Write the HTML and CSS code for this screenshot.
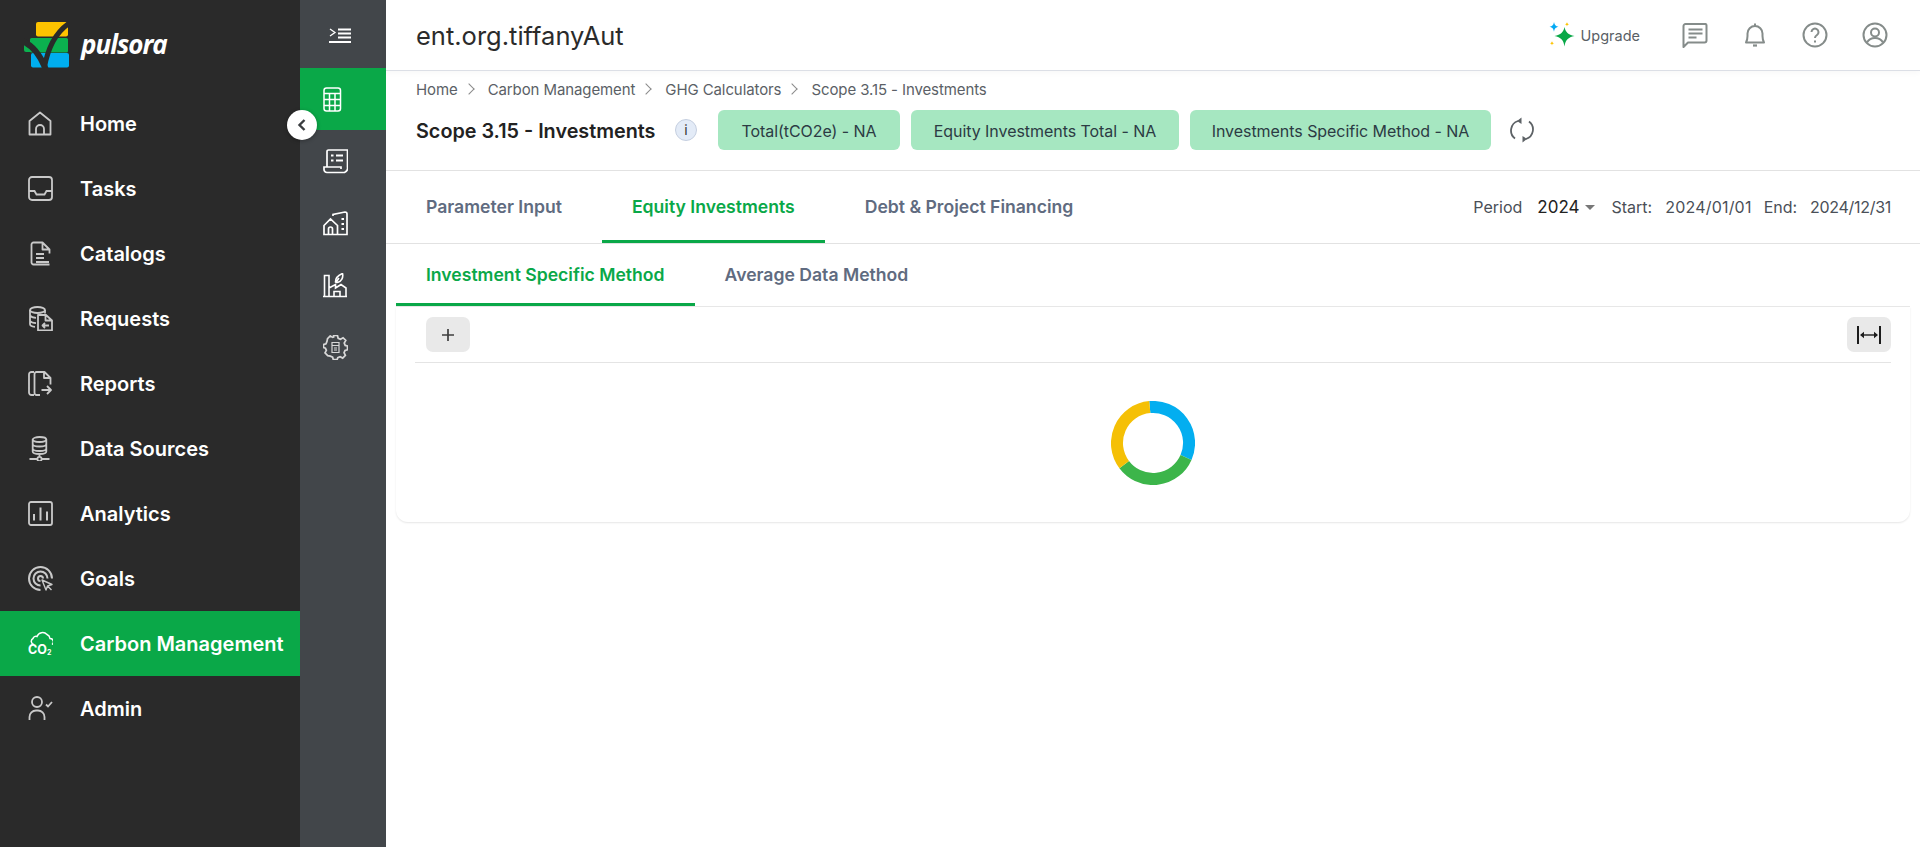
FILE: index.html
```html
<!DOCTYPE html>
<html lang="en">
<head>
    <meta charset="UTF-8">
    <title>Scope 3.15 - Investments</title>
    <link rel="stylesheet" href="styles.css">
</head>
<body>
<div class="app">
    <aside class="sidebar">
        <div class="logo">
            <svg class="logo-mark" viewBox="0 0 46 46">
                <rect x="12" y="0" width="32" height="14.500" rx="2" fill="#fdc300"/>
                <rect x="6" y="16" width="38" height="14.500" rx="1.500" fill="#0bb14f"/>
                <path d="M0 22l7 2v6H2a2 2 0 0 1-2-2z" fill="#0bb14f"/>
                <rect x="7" y="31" width="38" height="14.500" rx="2" fill="#00aeef"/>
                <path d="M-2 19c10 4 18 13 24 29" fill="none" stroke="#2a2a2a" stroke-width="6"/>
                <path d="M47 0C34 8 24 22 20 48" fill="none" stroke="#2a2a2a" stroke-width="5"/>
            </svg>
            <span class="logo-text">pulsora</span>
        </div>
        <nav class="nav">
            <a class="nav-item">
                <svg class="nav-icon" viewBox="0 0 25 25"><path d="M1.500 23.500V10L12 1.500 22.500 10v13.500zM8 23.500V18a4 4 0 0 1 8 0v5.500" stroke-linejoin="round"/></svg>
                <span>Home</span>
            </a>
            <a class="nav-item">
                <svg class="nav-icon" viewBox="0 0 25 25"><rect x="1" y="1" width="23" height="23" rx="3"/><path d="M1 15h5.500l2 3.500h8l2-3.500H24"/></svg>
                <span>Tasks</span>
            </a>
            <a class="nav-item">
                <svg class="nav-icon" viewBox="0 0 25 25"><path d="M21.500 23.500h-16a2 2 0 0 1-2-2v-18a2 2 0 0 1 2-2h9l7 7v4M14.500 1.500v7h7M8 13h8M8 17h8M8 21h13" stroke-linejoin="round"/></svg>
                <span>Catalogs</span>
            </a>
            <a class="nav-item">
                <svg class="nav-icon" viewBox="0 0 25 25"><ellipse cx="9.500" cy="4" rx="7.500" ry="3"/><path d="M2 4v14c0 1.500 2 2.500 5 2.800M17 4v3.500M2 9.500c1 1.500 3 2.200 6 2.400M2 15c1 1.200 3 2 6 2.200"/><path d="M10 9h8l6 5.500V24.500H10zM17.500 9v5.500H24M21 19.500h-6.500l2.500-2.500M14.500 19.500l2.500 2.500" stroke-linejoin="round"/></svg>
                <span>Requests</span>
            </a>
            <a class="nav-item">
                <svg class="nav-icon" viewBox="0 0 25 25"><path d="M6 1H3.500A2.500 2.500 0 0 0 1 3.500v18A2.500 2.500 0 0 0 3.500 24H6M12 24H8.500a2 2 0 0 1-2-2V3a2 2 0 0 1 2-2h8l6 6v6.500M16 1.500V7h6.500M13.500 19h9M19 15l4 4-4 4" stroke-linejoin="round"/></svg>
                <span>Reports</span>
            </a>
            <a class="nav-item">
                <svg class="nav-icon" viewBox="0 0 25 25"><ellipse cx="11.500" cy="3.500" rx="6.800" ry="2.500"/><path d="M4.700 3.500v12c0 1.500 3 2.500 6.800 2.500s6.800-1 6.800-2.500v-12M4.700 8c0 1.500 3 2.500 6.800 2.500S18.300 9.500 18.300 8M4.700 12.500c0 1.500 3 2.500 6.800 2.500s6.800-1 6.800-2.500M11.500 18v2.500M1.500 23H9M14 23h7.500"/><circle cx="11.500" cy="23" r="2.100"/></svg>
                <span>Data Sources</span>
            </a>
            <a class="nav-item">
                <svg class="nav-icon" viewBox="0 0 25 25"><rect x="1" y="1" width="23" height="23" rx="2"/><path d="M6 13v6.500M12.500 6.500v13M19 10.500v9" stroke-width="2"/></svg>
                <span>Analytics</span>
            </a>
            <a class="nav-item">
                <svg class="nav-icon" viewBox="0 0 25 25"><path d="M24 12.500A11.500 11.500 0 1 0 12.500 24M19.500 12.500a7 7 0 1 0-7 7M15 12.500a2.500 2.500 0 1 0-2.500 2.500" stroke-width="2"/><path d="M14 14l4 10 1.500-4 4.500-1.500zM19.500 20l4 4" stroke-linejoin="round" stroke-width="1.400"/></svg>
                <span>Goals</span>
            </a>
            <a class="nav-item active">
                <svg class="nav-icon" viewBox="0 0 25 25"><path d="M6 13.500a3.200 3.200 0 0 1-1-6 3 3 0 0 1 4-2 6 6 0 0 1 10-2 5 5 0 0 1 3 4 3.300 3.300 0 0 1 2 6" stroke-width="1.500"/><text class="co-text" x="0" y="23">CO<tspan class="co-sub" dy="1">2</tspan></text></svg>
                <span>Carbon Management</span>
            </a>
            <a class="nav-item">
                <svg class="nav-icon" viewBox="0 0 25 25"><circle cx="9" cy="6" r="5"/><path d="M1.500 24v-3a6.500 6.500 0 0 1 6.500-6.500h2a6.500 6.500 0 0 1 6.500 6.500v3M18 8.500l2 2 4-4.500"/></svg>
                <span>Admin</span>
            </a>
        </nav>
        <button class="collapse-btn">
            <svg viewBox="0 0 14 14" width="14" height="14"><path d="M9.500 2L4.500 7l5 5" fill="none" stroke="#3a3d40" stroke-width="2.400"/></svg>
        </button>
    </aside>

    <div class="rail">
        <a class="rail-item rail-toggle">
            <svg class="toggle-icon" viewBox="0 0 22 16"><path d="M1 1l5 3.500L1 8" stroke-width="1.300"/><path d="M9 1.500h13M9 5.500h13M9 9.500h13M0 14h22" stroke-width="2"/></svg>
        </a>
        <a class="rail-item active">
            <svg class="rail-icon" viewBox="0 0 25 25"><rect x="1" y="1" width="16.500" height="23" rx="2.500"/><path d="M1 6.500h16.500M1 12.500h16.500M1 18.500h16.500M6.500 6.500V24M12 6.500V24"/></svg>
        </a>
        <a class="rail-item">
            <svg class="rail-icon" viewBox="0 0 25 25"><path d="M4 18V2.500A1.500 1.500 0 0 1 5.500 1h19v17a5 5 0 0 1-3 5.500H4a3 3 0 0 1-3-3V18h17v2" stroke-width="1.700"/><path d="M8 6.500h2.500M13 6.500h7M8 11.500h2.500M13 11.500h7" stroke-width="2.200"/></svg>
        </a>
        <a class="rail-item">
            <svg class="rail-icon" viewBox="0 0 25 25"><path d="M1 23.500v-9l6.500-6.500 7 6.500v9zM5.500 23.500V18a2 2 0 0 1 4 0v5.500M10 5V3.500L22 1a2 2 0 0 1 2 2v20.500h-9" stroke-width="1.700"/><path d="M18.500 8h2.500M18.500 13h2.500M18.500 18h2.500" stroke-width="2.200"/></svg>
        </a>
        <a class="rail-item">
            <svg class="rail-icon" viewBox="0 0 25 25"><path d="M0 23.500h24M1.500 23.500V2.500h4.500v21M6 15l6.500-3.500v3.500l5.500-3.500 5 3.500v8.500M11 23.500V18.500h6v5M12.500 9c0-4 3-7 7-8.500 1 4-1 8-5 9zM12.500 10l3.500-5" stroke-width="1.600"/></svg>
        </a>
        <a class="rail-item">
            <svg class="rail-icon rail-gear" viewBox="0 0 25 25"><path d="M10.500 1h4l.8 3 2.400 1 2.700-1.600 2.800 2.800L21.600 9l1 2.400 2.400.6v4l-2.600.7-1 2.300 1.400 2.800-2.800 2.800-2.700-1.500-2.400 1-.7 2h-4l-.7-2.500-2.400-1L4.400 22 1.600 19.200 3 16.500 2 14.200 0 13.500v-3l2.600-.9 1-2.400L4.200 4.300 7 1.500 9.600 3l1-.5z" transform="translate(.5 -.5) scale(.96)" stroke-width="1.800"/><path d="M9 7.500h7v10H9zM9 10.500h7M11 13h3M11 15h3" stroke-width="1.200"/></svg>
        </a>
    </div>

    <main class="main">
        <header class="topbar">
            <h1 class="org-name">ent.org.tiffanyAut</h1>
            <div class="top-actions">
                <a class="upgrade">
                    <svg class="upgrade-icon" viewBox="0 0 26 26">
                        <path d="M15.500 5c1.200 5.500 3.500 7.500 10 9-6.500 1.500-8.800 3.500-10 10.500-1.200-7-3.500-9-10-10.500 6.500-1.500 8.800-3.500 10-9z" fill="#0aa848"/>
                        <path d="M5 0c.6 3 1.500 4 4.500 4.800C6.500 5.600 5.600 6.600 5 9.800 4.400 6.600 3.500 5.600.5 4.800 3.500 4 4.400 3 5 0z" fill="#03a9f4"/>
                        <path d="M18 0c.3 1.500.7 2 2.200 2.300C18.700 2.600 18.300 3 18 4.600c-.3-1.600-.7-2-2.200-2.300C17.300 2 17.700 1.500 18 0z" fill="#fdc300"/>
                        <path d="M3 19c.3 1.500.7 2 2.200 2.300C3.700 21.600 3.300 22 3 23.600c-.3-1.600-.7-2-2.200-2.300C2.300 21 2.700 20.500 3 19z" fill="#fdc300"/>
                    </svg>
                    <span>Upgrade</span>
                </a>
                <svg class="top-icon" viewBox="0 0 26 26"><path d="M1.500 25V4a2 2 0 0 1 2-2h20a1.500 1.500 0 0 1 1 1.500v15a2 2 0 0 1-2 2H6z" stroke-linejoin="round"/><path d="M6.500 7.500h14M6.500 11.500h14M6.500 15.500h8"/></svg>
                <svg class="top-icon" viewBox="0 0 26 26"><path d="M4 20.500c1-2 1.500-3 1.500-6.500v-2.500a7.500 7.500 0 0 1 15 0V14c0 3.500.5 4.500 1.500 6.500zM13 1.500V4" stroke-linejoin="round"/><path d="M11 23.500h4" stroke-width="2.200"/></svg>
                <svg class="top-icon" viewBox="0 0 26 26"><circle cx="13" cy="13" r="11.500"/><path d="M9.500 10a3.500 3.500 0 1 1 5.500 3c-1.500 1-2 1.700-2 3"/><path d="M13 18.500v2" stroke-width="2"/></svg>
                <svg class="top-icon" viewBox="0 0 26 26"><circle cx="13" cy="13" r="11.500"/><circle cx="13" cy="10.500" r="4"/><path d="M5 20.500c2-3.500 5-4.500 8-4.500s6 1 8 4.500"/></svg>
            </div>
        </header>

        <section class="page-head">
            <div class="breadcrumb">
                <span>Home</span><i class="crumb-sep"></i>
                <span>Carbon Management</span><i class="crumb-sep"></i>
                <span>GHG Calculators</span><i class="crumb-sep"></i>
                <span>Scope 3.15 - Investments</span>
            </div>
            <div class="title-row">
                <h2 class="page-title">Scope 3.15 - Investments</h2>
                <span class="info-badge">i</span>
                <div class="chips">
                    <span class="chip chip-total">Total(tCO2e) - NA</span>
                    <span class="chip chip-equity">Equity Investments Total - NA</span>
                    <span class="chip chip-method">Investments Specific Method - NA</span>
                </div>
                <svg class="sync-icon" viewBox="0 0 26 28"><path d="M6 22.500A10 10 0 0 1 9 5M20 5.500A10 10 0 0 1 17 23"/><path d="M12.500 1.500l-4.500 3.500 4.500 3zM13.500 26.500l4.500-3.500-4.500-3z" fill="#5d6266" stroke="none"/></svg>
            </div>
        </section>

        <div class="tabs-row">
            <div class="tabs">
                <a class="tab">Parameter Input</a>
                <a class="tab active">Equity Investments</a>
                <a class="tab">Debt &amp; Project Financing</a>
            </div>
            <div class="period">
                <span class="period-label">Period</span>
                <span class="period-year">2024</span>
                <i class="caret"></i>
                <span class="date-label">Start:</span>
                <span class="date-value">2024/01/01</span>
                <span class="date-label date-end">End:</span>
                <span class="date-value date-last">2024/12/31</span>
            </div>
        </div>

        <div class="subtabs">
            <a class="subtab active">Investment Specific Method</a>
            <a class="subtab">Average Data Method</a>
        </div>

        <section class="card">
            <div class="toolbar">
                <button class="tool-btn">
                    <svg viewBox="0 0 14 14" width="14" height="14"><path d="M7 1v12M1 7h12" stroke="#3f3f3f" stroke-width="1.700" fill="none"/></svg>
                </button>
                <button class="tool-btn">
                    <svg viewBox="0 0 24 18" width="24" height="18"><path d="M1 0v18M23 0v18" stroke="#1c1c1c" stroke-width="2" fill="none"/><path d="M4 9h16" stroke="#1c1c1c" stroke-width="1.400"/><path d="M3 9l4-3.200v6.400zM21 9l-4-3.200v6.400z" fill="#1c1c1c"/></svg>
                </button>
            </div>
            <div class="loader">
                <svg viewBox="0 0 84 84" width="84" height="84" class="spinner">
                    <path d="M38.800 6.100A36 36 0 0 1 75 56.500" stroke="#03aef0"/>
                    <path d="M75 56.500A36 36 0 0 1 13.200 63.600" stroke="#3cb54a"/>
                    <path d="M13.200 63.600A36 36 0 0 1 38.800 6.100" stroke="#f5c006"/>
                </svg>
            </div>
        </section>
    </main>
</div>
</body>
</html>
```

FILE: styles.css
```css
* {
    box-sizing: border-box;
}
html, body {
    margin: 0;
    height: 100%;
    overflow: hidden;
    background: #fff;
    font-family: "Inter", "Noto Sans", sans-serif;
    color: #333;
}
h1, h2 {
    margin: 0;
    font-weight: normal;
}
button {
    border: 0;
    padding: 0;
    font: inherit;
}
.app {
    display: flex;
    height: 847px;
}

/* dark sidebar */
.sidebar {
    position: relative;
    width: 300px;
    flex: none;
    background: #2a2a2a;
    z-index: 2;
}
.logo {
    display: flex;
    align-items: center;
    height: 91px;
    padding: 0 0 1px 24px;
}
.logo-mark {
    width: 46px;
    height: 46px;
    flex: none;
}
.logo-text {
    margin-left: 11px;
    margin-top: -2px;
    font-family: "Open Sans", sans-serif;
    font-size: 26px;
    font-weight: 700;
    font-style: italic;
    color: #fff;
    letter-spacing: -1px;
}
.nav-item {
    display: flex;
    align-items: center;
    height: 65px;
    padding-left: 28px;
    font-size: 20px;
    font-weight: 600;
    color: #fff;
}
.nav-item.active {
    background: #0aa848;
}
.nav-icon {
    width: 25px;
    height: 25px;
    margin-right: 27px;
    flex: none;
    fill: none;
    stroke: #c9c9c9;
    stroke-width: 1.800;
}
.nav-item.active .nav-icon {
    stroke: #fff;
}
.co-text {
    font-size: 12.500px;
    font-weight: 700;
    fill: #fff;
    stroke: none;
}
.co-sub {
    font-size: 7px;
}
.collapse-btn {
    position: absolute;
    left: 287px;
    top: 110px;
    width: 30px;
    height: 30px;
    border-radius: 50%;
    background: #fff;
    box-shadow: 0 1px 4px rgba(0, 0, 0, 0.3);
    display: flex;
    align-items: center;
    justify-content: center;
}

/* icon rail */
.rail {
    width: 86px;
    flex: none;
    background: #42464a;
}
.rail-item {
    display: flex;
    align-items: center;
    height: 62px;
    padding-left: 23px;
}
.rail-toggle {
    height: 68px;
    padding: 4px 0 0 29px;
}
.rail-item.active {
    background: #0aa848;
}
.toggle-icon {
    width: 22px;
    height: 16px;
    fill: none;
    stroke: #fff;
}
.rail-icon {
    width: 25px;
    height: 25px;
    fill: none;
    stroke: #fff;
    stroke-width: 1.500;
}
.rail-gear {
    stroke: #d8d8d8;
}

/* right side */
.main {
    flex: 1;
    min-width: 0;
}
.topbar {
    display: flex;
    align-items: center;
    justify-content: space-between;
    height: 71px;
    padding: 0 32px 0 30px;
    border-bottom: 1px solid #dcdfe6;
    box-shadow: 0 2px 6px rgba(0, 0, 0, 0.03);
}
.org-name {
    font-size: 25.500px;
    color: #2b2b2b;
}
.top-actions {
    display: flex;
    align-items: center;
}
.upgrade {
    display: flex;
    align-items: center;
    margin-right: 42px;
    font-size: 14.500px;
    color: #5a5f66;
}
.upgrade-icon {
    width: 26px;
    height: 26px;
    margin-right: 6px;
    margin-left: -3px;
}
.top-icon {
    width: 26px;
    height: 26px;
    margin-left: 34px;
    fill: none;
    stroke: #858c8a;
    stroke-width: 2;
}
.upgrade + .top-icon {
    margin-left: 0;
}

.page-head {
    height: 100px;
    padding: 9px 30px 0;
    border-bottom: 1px solid #e2e2e2;
}
.breadcrumb {
    display: flex;
    align-items: center;
    height: 18px;
    font-size: 15px;
    letter-spacing: -0.1px;
    color: #5b5f66;
}
.crumb-sep {
    width: 8px;
    height: 8px;
    margin: 0 15px 0 7px;
    border-top: 1.500px solid #8a8a8a;
    border-right: 1.500px solid #8a8a8a;
    transform: rotate(45deg);
}
.title-row {
    display: flex;
    align-items: center;
    height: 40px;
    margin-top: 12px;
}
.page-title {
    padding-top: 1px;
    font-size: 19.800px;
    font-weight: 600;
    color: #222;
    width: 239px;
    white-space: nowrap;
}
.info-badge {
    width: 22px;
    height: 22px;
    margin-left: 20px;
    border-radius: 50%;
    border: 1px solid #c5cfe0;
    background: #e3ebf7;
    text-align: center;
    font-size: 14px;
    line-height: 20px;
    color: #333;
}
.chips {
    display: flex;
    gap: 11px;
    margin-left: 21px;
}
.chip {
    display: flex;
    align-items: center;
    justify-content: center;
    height: 40px;
    padding-top: 1px;
    border-radius: 6px;
    background: #a6e7c1;
    font-size: 16px;
    letter-spacing: -0.05px;
    color: #2c3b44;
}
.chip-total {
    width: 182px;
}
.chip-equity {
    width: 268px;
}
.chip-method {
    width: 301px;
}
.sync-icon {
    width: 26px;
    height: 28px;
    margin-left: 18px;
    fill: none;
    stroke: #5d6266;
    stroke-width: 1.800;
}

.tabs-row {
    display: flex;
    justify-content: space-between;
    align-items: center;
    height: 73px;
    border-bottom: 1px solid #e2e2e2;
}
.tabs {
    display: flex;
    height: 72px;
    padding-left: 10px;
}
.tab {
    display: flex;
    align-items: center;
    padding: 2px 30px 0;
    margin-right: 10px;
    border-bottom: 3px solid transparent;
    font-size: 17.600px;
    font-weight: 600;
    color: #606b80;
}
.tab.active,
.subtab.active {
    color: #0aa848;
    border-bottom-color: #0aa848;
}
.period {
    display: flex;
    align-items: center;
    padding-right: 29px;
    font-size: 16px;
    color: #4a4f57;
}
.period-label {
    margin-right: 15px;
}
.period-year {
    font-size: 17px;
    color: #222;
}
.caret {
    width: 0;
    height: 0;
    margin: 0 17px 0 5px;
    border-left: 5px solid transparent;
    border-right: 5px solid transparent;
    border-top: 5px solid #777;
}
.date-label {
    margin-right: 13px;
}
.date-end {
    margin-left: 12px;
}
.date-value {
    letter-spacing: 0.2px;
}
.date-last {
    letter-spacing: -0.3px;
}

.subtabs {
    display: flex;
    height: 63px;
    margin: 0 10px 0 10px;
    border-bottom: 1px solid #e8e8e8;
}
.subtab {
    display: flex;
    align-items: center;
    height: 62px;
    padding: 2px 30px 0;
    border-bottom: 3px solid transparent;
    font-size: 17.600px;
    font-weight: 600;
    color: #606b80;
}

.card {
    height: 215px;
    margin: 0 10px 0 10px;
    padding: 10px 19px 0 19px;
    border-radius: 0 0 12px 12px;
    box-shadow: 0 1px 2px rgba(0, 0, 0, 0.1);
}
.toolbar {
    display: flex;
    justify-content: space-between;
    height: 46px;
    padding: 0 0 10px 11px;
    border-bottom: 1px solid #e4e4e4;
}
.tool-btn {
    display: flex;
    align-items: center;
    justify-content: center;
    width: 44px;
    height: 35px;
    border-radius: 7px;
    background: #e9e9e9;
}
.loader {
    display: flex;
    justify-content: center;
    padding-top: 38px;
}
.spinner path {
    fill: none;
    stroke-width: 12;
}
```
